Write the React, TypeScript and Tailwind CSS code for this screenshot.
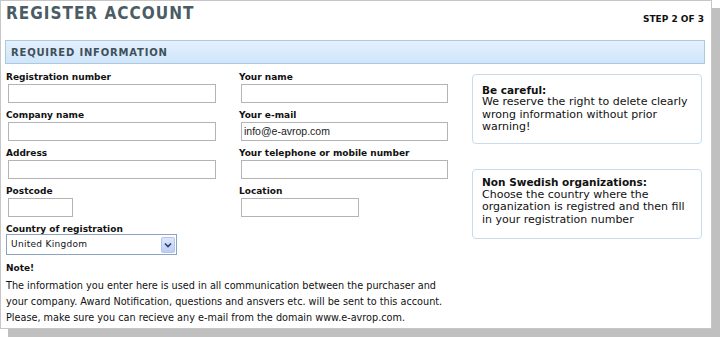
import React from "react";

const font = { fontFamily: '"DejaVu Sans", Verdana, sans-serif' };
const cond = { fontFamily: '"DejaVu Sans Condensed", "DejaVu Sans", Verdana, sans-serif' };

function Field({ label, width, value }: { label: string; width: string; value?: string }) {
  return (
    <div className="flex flex-col">
      <div className="h-[13px] text-[9px] leading-[13px] font-bold text-[#111]">{label}</div>
      <div
        className={`${width} h-[19px] ml-[2px] mb-[6px] border border-[#b4b4b4] bg-white flex items-center pl-[2px] text-[10.5px] text-[#222]`}
        style={{ fontFamily: '"Liberation Sans", Arial, sans-serif' }}
      >
        {value}
      </div>
    </div>
  );
}

export default function App() {
  return (
    <div className="w-[720px] h-[337px] bg-white" style={font}>
      <div className="w-[712px] h-[329px] border border-[#c6c6c6] bg-white shadow-[8px_8px_0_#c0c0c0] flex flex-col">
        <div className="flex justify-between items-start">
          <div className="pl-[5px] pt-[1px] text-[17px] leading-[22px] font-bold tracking-[1px] text-[#4a5c64]" style={cond}>
            REGISTER ACCOUNT
          </div>
          <div className="pr-[7px] pt-[12px] text-[9px] leading-[12px] font-bold text-[#111]">STEP 2 OF 3</div>
        </div>
        <div className="mt-[15px] ml-[4px] mr-[6px] h-[24px] border border-[#aec8de] bg-gradient-to-b from-[#e3f0fd] to-[#cfe5fa] flex items-center pl-[5px] text-[10px] font-bold tracking-[0.8px] text-[#3f505a]">
          REQUIRED INFORMATION
        </div>
        <div className="flex mt-[7px]">
          <div className="flex-1 pl-[5px]">
            <div className="grid grid-cols-[233px_233px]">
              <Field label="Registration number" width="w-[208px]" />
              <Field label="Your name" width="w-[207px]" />
              <Field label="Company name" width="w-[208px]" />
              <Field label="Your e-mail" width="w-[207px]" value="info@e-avrop.com" />
              <Field label="Address" width="w-[208px]" />
              <Field label="Your telephone or mobile number" width="w-[207px]" />
              <Field label="Postcode" width="w-[65px]" />
              <Field label="Location" width="w-[118px]" />
            </div>
            <div className="h-[13px] text-[9px] leading-[13px] font-bold text-[#111]">Country of registration</div>
            <div className="w-[171px] h-[21px] border border-[#8aa4c0] bg-white flex items-center justify-between mt-[-2px]">
              <span className="pl-[4px] text-[9px] text-[#111] tracking-[0.3px]">United Kingdom</span>
              <div className="w-[14px] h-[16px] mr-[1px] rounded-[2px] border border-[#b2c4ec] bg-gradient-to-b from-[#dde6fb] to-[#bccdf6] flex items-center justify-center">
                <svg width="8" height="6" viewBox="0 0 8 6">
                  <path d="M1 1.5 L4 4.5 L7 1.5" fill="none" stroke="#2d3d6b" strokeWidth="1.6" />
                </svg>
              </div>
            </div>
            <div className="mt-[5px] text-[9.7px] leading-[16px] text-[#111]">
              <div className="font-bold text-[9px] mb-[2px]">Note!</div>
              <div>
                The information you enter here is used in all communication between the purchaser and
                <br />
                your company. Award Notification, questions and ansvers etc. will be sent to this account.
                <br />
                Please, make sure you can recieve any e-mail from the domain www.e-avrop.com.
              </div>
            </div>
          </div>
          <div className="w-[230px] mr-[9px] flex flex-col">
            <div className="mt-[3px] h-[70px] rounded-[4px] border border-[#c7dbec] pl-[9px] pr-[6px] pt-[9px] text-[11px] leading-[12.3px] text-[#111]">
              <div className="font-bold text-[10.5px]">Be careful:</div>
              <div>We reserve the right to delete clearly wrong information without prior warning!</div>
            </div>
            <div className="mt-[25px] h-[70px] rounded-[4px] border border-[#c7dbec] pl-[9px] pr-[6px] pt-[6px] text-[11px] leading-[12.5px] text-[#111]">
              <div className="font-bold text-[10.5px]">Non Swedish organizations:</div>
              <div>Choose the country where the organization is registred and then fill in your registration number</div>
            </div>
          </div>
        </div>
      </div>
    </div>
  );
}
